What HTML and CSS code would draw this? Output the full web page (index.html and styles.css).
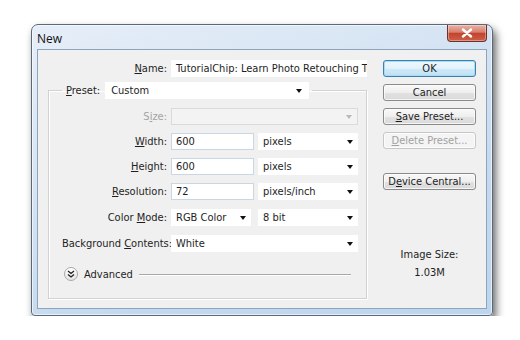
FILE: index.html
```html
<!DOCTYPE html>
<html lang="en">
<head>
  <meta charset="UTF-8">
  <title>New</title>
  <link rel="stylesheet" href="styles.css">
</head>
<body>

<div class="page">
  <div class="window">
    <div class="titlebar">
      <span class="title">New</span>
      <div class="close">
        <svg width="12" height="10" viewBox="0 0 12 10"><path d="M2 1.5 L10 8.5 M10 1.5 L2 8.5" stroke="#fff" stroke-width="2.4" stroke-linecap="round"/></svg>
      </div>
    </div>

    <div class="client">
      <div class="form">
        <div class="name-row">
          <span class="lbl"><u>N</u>ame:</span>
          <div class="field name">TutorialChip: Learn Photo Retouching Tu</div>
        </div>

        <fieldset class="group">
          <legend class="preset-head">
            <span class="lbl"><u>P</u>reset:</span>
            <div class="select preset">Custom<i class="arrow"></i></div>
          </legend>

          <div class="rows">
            <span class="lbl off">S<u>i</u>ze:</span>
            <div class="select wide disabled"><i class="arrow"></i></div>

            <span class="lbl"><u>W</u>idth:</span>
            <div class="pair">
              <div class="field num">600</div>
              <div class="select unit">pixels<i class="arrow"></i></div>
            </div>

            <span class="lbl"><u>H</u>eight:</span>
            <div class="pair">
              <div class="field num">600</div>
              <div class="select unit">pixels<i class="arrow"></i></div>
            </div>

            <span class="lbl"><u>R</u>esolution:</span>
            <div class="pair">
              <div class="field num">72</div>
              <div class="select unit">pixels/inch<i class="arrow"></i></div>
            </div>

            <span class="lbl lower">Color <u>M</u>ode:</span>
            <div class="pair lower">
              <div class="select mode">RGB Color<i class="arrow"></i></div>
              <div class="select unit">8 bit<i class="arrow"></i></div>
            </div>

            <span class="lbl lowest">Background <u>C</u>ontents:</span>
            <div class="select wide lowest">White<i class="arrow"></i></div>
          </div>

          <div class="advanced">
            <span class="toggle">
              <svg width="8" height="8" viewBox="0 0 8 8"><path d="M1 1 L4 3.5 L7 1 M1 4.5 L4 7 L7 4.5" fill="none" stroke="#222" stroke-width="1.3"/></svg>
            </span>
            <span class="adv-text">Advanced</span>
            <span class="rule"></span>
          </div>
        </fieldset>
      </div>

      <div class="side">
        <div class="btn default">OK</div>
        <div class="btn">Cancel</div>
        <div class="btn"><u>S</u>ave Preset...</div>
        <div class="btn off"><u>D</u>elete Preset...</div>
        <div class="btn gap">D<u>e</u>vice Central...</div>
        <div class="size-info">
          <div>Image Size:</div>
          <div>1.03M</div>
        </div>
      </div>
    </div>
  </div>
</div>

</body>
</html>
```

FILE: styles.css
```css
body {
  margin: 0;
  background: #fff;
  font-family: "DejaVu Sans Condensed", "DejaVu Sans", sans-serif;
  font-size: 11px;
  color: #1e1e1e;
}
.page {
  padding: 24px 0 0 31px;
}
.window {
  width: 462px;
  height: 292px;
  box-sizing: border-box;
  border: 1px solid #5b6878;
  border-radius: 7px 7px 4px 4px;
  background: linear-gradient(160deg, #e6eef8 0%, #d6e4f3 35%, #c4d9ef 70%, #bdd5ee 100%);
  box-shadow: 3px 5px 9px rgba(0, 0, 0, 0.6), inset 0 0 0 1px rgba(255, 255, 255, 0.6);
  padding: 0 5px 6px 5px;
  display: flex;
  flex-direction: column;
}
.titlebar {
  height: 24px;
  display: flex;
  justify-content: space-between;
  align-items: flex-start;
}
.title {
  font-family: "Open Sans", "DejaVu Sans", sans-serif;
  font-size: 12px;
  color: #111;
  padding: 5px 0 0 0;
}
.close {
  width: 40px;
  height: 17px;
  box-sizing: border-box;
  border: 1px solid #6e3129;
  border-top: none;
  border-radius: 0 0 4px 4px;
  background: linear-gradient(#eab1a4 0%, #d8806d 45%, #c2442e 52%, #cd5f48 100%);
  box-shadow: inset 0 0 0 1px rgba(255, 255, 255, 0.35);
  display: flex;
  align-items: center;
  justify-content: center;
}
.client {
  flex: 1;
  background: #f0f0f0;
  border: 1px solid #8da4bd;
  display: flex;
}
.form {
  width: 329px;
  padding-top: 10px;
}
.lbl {
  text-align: right;
  white-space: nowrap;
}
.lbl u, .btn u {
  text-decoration-thickness: 1px;
  text-underline-offset: 1px;
}
.name-row {
  display: grid;
  grid-template-columns: 129px 196px;
  column-gap: 4px;
  align-items: center;
}
.field {
  height: 17px;
  box-sizing: border-box;
  background: #fff;
  padding: 0 5px;
  line-height: 17px;
  white-space: nowrap;
  overflow: hidden;
}
.field.num {
  width: 83px;
  border: 1px solid #c9d6e4;
  line-height: 15px;
  padding: 0 4px;
}
.group {
  width: 319px;
  height: 217px;
  box-sizing: border-box;
  margin: 5px 0 0 10px;
  padding: 8px 0 0 13px;
  border: 1px solid #d2d2d2;
  box-shadow: inset 1px 1px 0 #fff, 1px 1px 0 #fff;
}
.preset-head {
  padding: 0 3px 0 4px;
  display: flex;
  align-items: center;
  gap: 5px;
}
.select {
  position: relative;
  height: 17px;
  box-sizing: border-box;
  background: #fff;
  padding: 0 18px 0 5px;
  line-height: 17px;
  white-space: nowrap;
}
.arrow {
  position: absolute;
  right: 5px;
  top: 7px;
  width: 0;
  height: 0;
  border-left: 3.5px solid transparent;
  border-right: 3.5px solid transparent;
  border-top: 4px solid #111;
}
.select.preset {
  width: 204px;
  padding-left: 6px;
}
.select.preset .arrow {
  right: 7px;
}
.select.wide {
  width: 187px;
}
.select.unit {
  width: 100px;
}
.select.mode {
  width: 80px;
}
.select.disabled {
  background: #f3f3f3;
  border: 1px solid #dadada;
}
.select.disabled .arrow {
  border-top-color: #b9b9b9;
  top: 6px;
}
.rows {
  display: grid;
  grid-template-columns: 105px 187px;
  column-gap: 4px;
  row-gap: 8px;
  align-items: center;
  margin-top: 1px;
}
.lbl.off {
  color: #a3a3a3;
}
.pair {
  display: flex;
  gap: 4px;
}
.pair .select.mode + .select.unit {
  margin-left: 3px;
}
.lower {
  position: relative;
  top: 1px;
}
.lowest {
  position: relative;
  top: 2px;
}
.advanced {
  display: flex;
  align-items: center;
  margin: 17px 15px 0 2px;
}
.toggle {
  width: 14px;
  height: 14px;
  box-sizing: border-box;
  border: 1px solid #a9a9a9;
  border-radius: 50%;
  background: linear-gradient(#ffffff, #e4e4e4);
  display: flex;
  align-items: center;
  justify-content: center;
}
.adv-text {
  margin-left: 6px;
}
.rule {
  flex: 1;
  height: 1px;
  margin-left: 6px;
  background: #a8a8a8;
  box-shadow: 0 1px 0 #fff;
}
.side {
  width: 93px;
  margin-left: 16px;
  padding-top: 10px;
  display: flex;
  flex-direction: column;
  gap: 7px;
}
.btn {
  height: 17px;
  box-sizing: border-box;
  border: 1px solid #8a8a8a;
  border-radius: 3px;
  background: linear-gradient(#f8f8f8 0%, #efefef 50%, #e2e2e2 51%, #d9d9d9 100%);
  box-shadow: inset 0 0 0 1px rgba(255, 255, 255, 0.7);
  text-align: center;
  line-height: 15px;
  color: #1e1e1e;
}
.btn.default {
  border-color: #3c7fb1;
  background: linear-gradient(#eef8fd 0%, #e2f2fb 50%, #cfe9f7 51%, #bfe1f4 100%);
  box-shadow: inset 0 0 0 1px #a6ddf3;
}
.btn.off {
  color: #a2a2a2;
  border-color: #c4c8cb;
  background: #f4f4f4;
}
.btn.gap {
  margin-top: 17px;
}
.size-info {
  margin-top: 49px;
  text-align: center;
  line-height: 18px;
}
```
